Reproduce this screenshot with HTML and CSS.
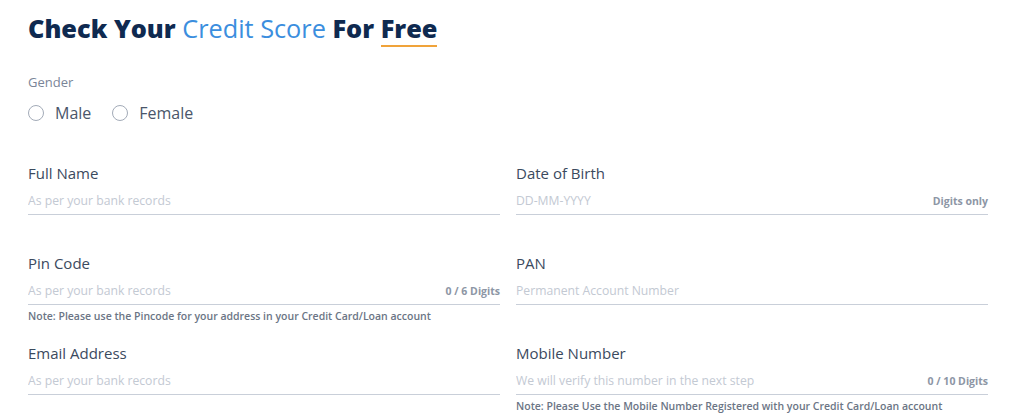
FILE: index.html
```html
<!DOCTYPE html>
<html lang="en">
<head>
    <meta charset="UTF-8">
    <meta name="viewport" content="width=device-width, initial-scale=1.0">
    <title>Check Your Credit Score</title>
    <link rel="stylesheet" href="styles.css">
</head>
<body>
    <div class="page">
        <h1 class="title">Check Your <span class="accent">Credit Score</span> For <span class="underline">Free</span></h1>

        <div class="gender">
            <div class="gender-label">Gender</div>
            <div class="radio-row">
                <label class="radio"><input type="radio" name="gender" value="male"><span class="circle"></span>Male</label>
                <label class="radio"><input type="radio" name="gender" value="female"><span class="circle"></span>Female</label>
            </div>
        </div>

        <form class="form-grid">
            <div class="field">
                <label for="fullName">Full Name</label>
                <div class="input-wrap">
                    <input type="text" id="fullName" placeholder="As per your bank records">
                </div>
            </div>
            <div class="field">
                <label for="dob">Date of Birth</label>
                <div class="input-wrap">
                    <input type="text" id="dob" placeholder="DD-MM-YYYY">
                    <span class="hint">Digits only</span>
                </div>
            </div>
            <div class="field">
                <label for="pin">Pin Code</label>
                <div class="input-wrap">
                    <input type="text" id="pin" placeholder="As per your bank records">
                    <span class="hint">0 / 6 Digits</span>
                </div>
                <p class="note">Note: Please use the Pincode for your address in your Credit Card/Loan account</p>
            </div>
            <div class="field">
                <label for="pan">PAN</label>
                <div class="input-wrap">
                    <input type="text" id="pan" placeholder="Permanent Account Number">
                </div>
            </div>
            <div class="field">
                <label for="email">Email Address</label>
                <div class="input-wrap">
                    <input type="email" id="email" placeholder="As per your bank records">
                </div>
            </div>
            <div class="field">
                <label for="mobile">Mobile Number</label>
                <div class="input-wrap">
                    <input type="tel" id="mobile" placeholder="We will verify this number in the next step">
                    <span class="hint">0 / 10 Digits</span>
                </div>
                <p class="note">Note: Please Use the Mobile Number Registered with your Credit Card/Loan account</p>
            </div>
        </form>
    </div>
</body>
</html>
```

FILE: styles.css
```css
* {
    margin: 0;
    padding: 0;
    box-sizing: border-box;
}

body {
    font-family: "Open Sans", "Liberation Sans", sans-serif;
    background-color: #ffffff;
    color: #3b4a5e;
    overflow: hidden;
}

.page {
    padding: 0 36px 0 28px;
}

.title {
    margin-top: 10px;
    font-size: 25.3px;
    line-height: 36px;
    font-weight: 800;
    color: #0f2a50;
    white-space: nowrap;
}

.title .accent {
    font-weight: 400;
    color: #3b8ede;
}

.title .underline {
    border-bottom: 2px solid #f0a33a;
}

.gender {
    margin-top: 27px;
}

.gender-label {
    font-size: 13px;
    line-height: 18px;
    color: #7a8598;
}

.radio-row {
    display: flex;
    gap: 21px;
    margin-top: 10px;
}

.radio {
    display: flex;
    align-items: center;
    gap: 11px;
    font-size: 16px;
    line-height: 24px;
    color: #4a566a;
    cursor: pointer;
}

.radio input {
    display: none;
}

.radio .circle {
    width: 16px;
    height: 16px;
    border: 1.5px solid #a3abb8;
    border-radius: 50%;
}

.form-grid {
    display: grid;
    grid-template-columns: 1fr 1fr;
    grid-auto-rows: 90px;
    column-gap: 16px;
    margin-top: 38px;
}

.field label {
    display: block;
    font-size: 15px;
    line-height: 20px;
    color: #3b4a5e;
}

.input-wrap {
    display: flex;
    align-items: baseline;
    padding: 9px 0 4px;
    border-bottom: 1px solid #c9cfd9;
}

.input-wrap input {
    flex: 1;
    border: none;
    outline: none;
    padding: 0;
    font-family: inherit;
    font-size: 12.2px;
    line-height: 18px;
    height: 18px;
    color: #3b4a5e;
    background: transparent;
}

.input-wrap input::placeholder {
    color: #c3c9d3;
}

.hint {
    font-size: 10.5px;
    font-weight: 700;
    color: #8d96a5;
    white-space: nowrap;
}

.note {
    margin-top: 4px;
    font-size: 10.5px;
    line-height: 14px;
    font-weight: 600;
    color: #6b7585;
    white-space: nowrap;
}
```
